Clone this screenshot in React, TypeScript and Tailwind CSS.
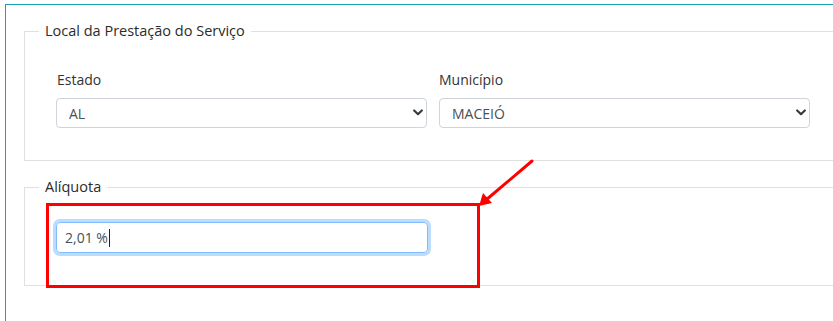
import React from 'react';

const Chevron: React.FC = () => (
  <svg
    className="pointer-events-none absolute right-[4px] top-[11px]"
    width="10"
    height="7"
    viewBox="0 0 10 7"
  >
    <path d="M1.2 1.5 L5 5.2 L8.8 1.5" fill="none" stroke="#3a3a3a" strokeWidth="2.2" strokeLinecap="round" strokeLinejoin="round" />
  </svg>
);

const Select: React.FC<{ value: string; label: string }> = ({ value, label }) => (
  <div className="relative">
    <select
      defaultValue={value}
      className="h-[30px] w-full appearance-none rounded-[4px] border border-[#ced4da] bg-white pl-[12px] pr-[24px] text-[14px] text-[#495057]"
    >
      <option value={value}>{label}</option>
    </select>
    <Chevron />
  </div>
);

const App: React.FC = () => {
  return (
    <div className="relative w-[833px] h-[321px] overflow-hidden bg-white text-[#333] font-['Open_Sans',sans-serif]">
      <div className="ml-[5px] mt-[4px] h-[330px] w-[840px] border-t border-l border-[#17a2b8] pl-[18px] pt-[16px]">
        {/* Local da Prestação */}
        <fieldset className="w-[830px] border border-[#e0e0e0] px-[14px] pb-[32px]">
          <legend className="px-[6px] text-[14.5px] leading-[20px] text-[#2b2b2b]">Local da Prestação do Serviço</legend>
          <div className="grid grid-cols-[371px_371px] gap-x-[12px] pl-[17px] pt-[29px]">
            <div className="flex flex-col gap-[8px]">
              <label className="pl-[1px] text-[14px] leading-[20px] text-[#333]">Estado</label>
              <Select value="AL" label="AL" />
            </div>
            <div className="flex flex-col gap-[8px]">
              <label className="text-[14px] leading-[20px] text-[#333]">Município</label>
              <Select value="MACEIO" label="MACEIÓ" />
            </div>
          </div>
        </fieldset>

        {/* Alíquota */}
        <fieldset className="mt-[16px] w-[830px] border border-[#e0e0e0] px-[14px] pb-[32px]">
          <legend className="px-[6px] text-[14.5px] leading-[20px] text-[#2b2b2b]">Alíquota</legend>
          <div className="pl-[17px] pt-[25px]">
            <div className="flex h-[31px] w-[372px] items-center rounded-[4px] border border-[#80bdff] px-[8px] text-[14px] text-[#495057] shadow-[0_0_0_3px_#bcdcfd]">
              <span>2,01 %</span>
              <span className="ml-[1px] h-[18px] w-px bg-[#222]" />
            </div>
          </div>
        </fieldset>
      </div>

      {/* annotation */}
      <div className="absolute left-[46px] top-[203px] h-[85px] w-[434px] border-[3px] border-[#ff0000]" />
      <svg className="absolute left-0 top-0" width="833" height="321" viewBox="0 0 833 321">
        <line x1="532" y1="161" x2="486" y2="200" stroke="#ff0000" strokeWidth="3" strokeLinecap="round" />
        <polygon points="479,206 483,193 492,203" fill="#ff0000" />
      </svg>
    </div>
  );
};

export default App;
